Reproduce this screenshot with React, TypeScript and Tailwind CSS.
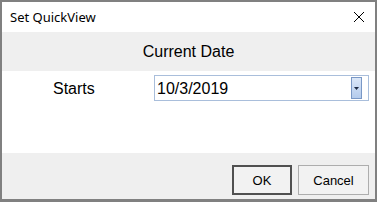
import React from 'react';

const App: React.FC = () => {
  return (
    <div className="w-[377px] h-[202px] flex flex-col border-2 border-b-[3px] border-[#808080] bg-white font-['Liberation_Sans',Arial,sans-serif] text-black">
      {/* Title bar */}
      <div className="h-[30px] flex items-center justify-between bg-white pl-[8px] pr-[8px]">
        <span className="text-[13px] font-['Noto_Sans','Open_Sans',sans-serif] leading-none">Set QuickView</span>
        <svg width="12" height="12" viewBox="0 0 12 12" className="mr-[2px]">
          <path d="M1 1L11 11M11 1L1 11" stroke="#000" strokeWidth="1" />
        </svg>
      </div>

      {/* Header band */}
      <div className="h-[39px] bg-[#efefef] flex items-center justify-center">
        <span className="text-[16px] leading-none pt-[1px]">Current Date</span>
      </div>

      {/* Body */}
      <div className="h-[82px] bg-white pt-[4px]">
        <div className="flex items-center h-[26px]">
          <span className="text-[16px] leading-none ml-[51px] w-[101px] pt-[2px]">Starts</span>
          <div className="w-[215px] h-[26px] border border-[#a9bedb] flex items-center justify-between pl-[2px] pr-[6px]">
            <span className="text-[16px] leading-none pt-[2px]">10/3/2019</span>
            <div className="w-[11px] h-[22px] border border-[#7a98c6] bg-gradient-to-b from-[#dbe7f8] to-[#b4cbec] flex items-center justify-center">
              <svg width="5" height="3" viewBox="0 0 5 3">
                <path d="M0 0H5L2.5 3Z" fill="#1d2a44" />
              </svg>
            </div>
          </div>
        </div>
      </div>

      {/* Footer */}
      <div className="flex-1 bg-[#efefef] flex justify-end items-start pt-[12px] pr-[6px] gap-[6px]">
        <button className="w-[60px] h-[30px] border-2 border-[#505050] bg-[#f2f2f2] text-[13px] leading-none">OK</button>
        <button className="w-[71px] h-[30px] border border-[#adadad] bg-[#f2f2f2] text-[13px] leading-none">Cancel</button>
      </div>
    </div>
  );
};

export default App;
